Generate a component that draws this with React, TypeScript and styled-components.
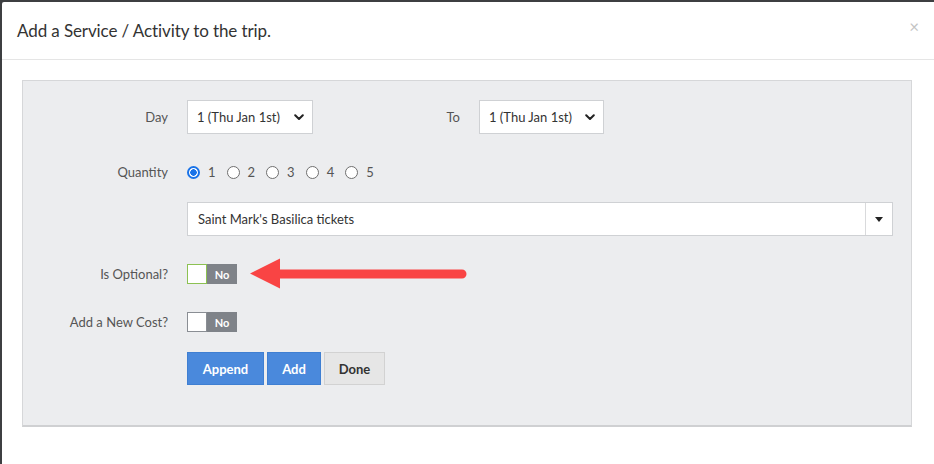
import styled, { createGlobalStyle } from 'styled-components'

const GlobalStyle = createGlobalStyle`
  html, body {
    margin: 0;
    padding: 0;
    background: #3d3f41;
  }
  body {
    font-family: Lato, "Liberation Sans", sans-serif;
  }
`

const Page = styled.div`
  width: 934px;
  height: 464px;
  padding: 2px 0 0 2px;
  box-sizing: border-box;
  overflow: hidden;
`

const Modal = styled.div`
  background: #ffffff;
  height: 480px;
  border-top-left-radius: 2px;
`

const Header = styled.header`
  display: flex;
  align-items: center;
  justify-content: space-between;
  height: 57px;
  padding: 0 15px 0 15px;
  border-bottom: 1px solid #e5e5e5;
`

const Title = styled.h4`
  margin: 0;
  font-size: 17px;
  font-weight: 400;
  color: #333333;
  letter-spacing: -0.1px;
`

const Close = styled.span`
  font-size: 17px;
  color: #c4c4c4;
  margin-top: -8px;
  line-height: 1;
`

const Body = styled.div`
  padding: 20px 22px 0 20px;
`

const Panel = styled.div`
  background: #ecedef;
  border: 1px solid #d6d7d9;
  border-bottom: 2px solid #cfd0d2;
  padding: 19px 18px 40px 0;
  height: 347px;
  box-sizing: border-box;
`

const Row = styled.div<{ $top: number; $height: number }>`
  display: flex;
  align-items: center;
  margin-top: ${({ $top }) => $top}px;
  height: ${({ $height }) => $height}px;
  &:first-child {
    margin-top: 0;
  }
`

const Label = styled.label<{ $width: number }>`
  width: ${({ $width }) => $width}px;
  flex-shrink: 0;
  text-align: right;
  padding-right: 19px;
  box-sizing: content-box;
  font-size: 13px;
  color: #555555;
`

const Spacer = styled.div`
  width: 164px;
  flex-shrink: 0;
`

const SelectBox = styled.div<{ $width: number }>`
  display: flex;
  align-items: center;
  justify-content: space-between;
  width: ${({ $width }) => $width}px;
  height: 34px;
  box-sizing: border-box;
  padding: 0 8px 0 9px;
  background: #ffffff;
  border: 1px solid #cfd1d4;
  font-size: 13px;
  color: #333333;
`

const Chevron = () => (
  <svg width="10" height="7" viewBox="0 0 10 7">
    <path d="M1.2 1.2 L5 5 L8.8 1.2" fill="none" stroke="#222" strokeWidth="2" strokeLinecap="round" strokeLinejoin="round" />
  </svg>
)

const RadioGroup = styled.div`
  display: flex;
  align-items: center;
  gap: 11px;
`

const RadioItem = styled.span`
  display: inline-flex;
  align-items: center;
  gap: 8px;
  font-size: 13px;
  color: #555555;
`

const RadioDot = styled.span<{ $checked?: boolean }>`
  width: 13px;
  height: 13px;
  border-radius: 50%;
  box-sizing: border-box;
  border: ${({ $checked }) => ($checked ? '2px solid #1a73e8' : '1px solid #6f6f6f')};
  background: ${({ $checked }) => ($checked ? 'radial-gradient(circle, #1a73e8 0 3px, #fff 3.5px)' : '#fff')};
`

const Combo = styled.div`
  display: flex;
  align-items: stretch;
  width: 706px;
  height: 34px;
  box-sizing: border-box;
  background: #ffffff;
  border: 1px solid #cfd1d4;
`

const ComboText = styled.div`
  flex: 1;
  display: flex;
  align-items: center;
  padding-left: 10px;
  font-size: 13px;
  color: #333333;
`

const ComboButton = styled.div`
  width: 26px;
  display: flex;
  align-items: center;
  justify-content: center;
  border-left: 1px solid #d9dadc;
`

const Caret = styled.span`
  width: 0;
  height: 0;
  border-left: 4px solid transparent;
  border-right: 4px solid transparent;
  border-top: 5px solid #222;
`

const Toggle = styled.div`
  display: flex;
  width: 50px;
  height: 20px;
`

const Knob = styled.span<{ $focus?: boolean }>`
  width: 20px;
  height: 20px;
  box-sizing: border-box;
  background: #ffffff;
  border: 1px solid ${({ $focus }) => ($focus ? '#8cc152' : '#8a8e94')};
`

const ToggleOff = styled.span`
  flex: 1;
  display: flex;
  align-items: center;
  justify-content: center;
  background: #7f8389;
  color: #ffffff;
  font-size: 11px;
  font-weight: 700;
`

const Arrow = styled.svg`
  margin-left: 13px;
  flex-shrink: 0;
`

const Buttons = styled.div`
  display: flex;
  gap: 3px;
`

const Button = styled.button<{ $primary?: boolean; $width: number }>`
  width: ${({ $width }) => $width}px;
  height: 33px;
  border: 1px solid ${({ $primary }) => ($primary ? '#3f7fd2' : '#d2d2d2')};
  background: ${({ $primary }) => ($primary ? '#4a89dc' : '#e6e6e6')};
  color: ${({ $primary }) => ($primary ? '#ffffff' : '#333333')};
  font-family: inherit;
  font-size: 13px;
  font-weight: 700;
  padding: 0;
  border-radius: 0;
`

export default function App() {
  return (
    <>
      <GlobalStyle />
      <Page>
        <Modal>
          <Header>
            <Title>Add a Service / Activity to the trip.</Title>
            <Close>×</Close>
          </Header>
          <Body>
            <Panel>
              <Row $top={0} $height={34}>
                <Label $width={145}>Day</Label>
                <SelectBox $width={126}>
                  1 (Thu Jan 1st)
                  <Chevron />
                </SelectBox>
                <Label $width={147}>To</Label>
                <SelectBox $width={125}>
                  1 (Thu Jan 1st)
                  <Chevron />
                </SelectBox>
              </Row>
              <Row $top={21} $height={34}>
                <Label $width={145}>Quantity</Label>
                <RadioGroup>
                  {[1, 2, 3, 4, 5].map((n) => (
                    <RadioItem key={n}>
                      <RadioDot $checked={n === 1} />
                      {n}
                    </RadioItem>
                  ))}
                </RadioGroup>
              </Row>
              <Row $top={13} $height={34}>
                <Spacer />
                <Combo>
                  <ComboText>Saint Mark's Basilica tickets</ComboText>
                  <ComboButton>
                    <Caret />
                  </ComboButton>
                </Combo>
              </Row>
              <Row $top={26} $height={24}>
                <Label $width={145}>Is Optional?</Label>
                <Toggle>
                  <Knob $focus />
                  <ToggleOff>No</ToggleOff>
                </Toggle>
                <Arrow width="218" height="32" viewBox="0 0 218 32">
                  <path d="M0 15.5 L30 0.5 L30 11.5 L212 11.5 A4.5 4.5 0 0 1 212 20.5 L30 20.5 L30 30.5 Z" fill="#f94444" />
                </Arrow>
              </Row>
              <Row $top={24} $height={24}>
                <Label $width={145}>Add a New Cost?</Label>
                <Toggle>
                  <Knob />
                  <ToggleOff>No</ToggleOff>
                </Toggle>
              </Row>
              <Row $top={18} $height={33}>
                <Spacer />
                <Buttons>
                  <Button $primary $width={77}>Append</Button>
                  <Button $primary $width={54}>Add</Button>
                  <Button $width={61}>Done</Button>
                </Buttons>
              </Row>
            </Panel>
          </Body>
        </Modal>
      </Page>
    </>
  )
}
